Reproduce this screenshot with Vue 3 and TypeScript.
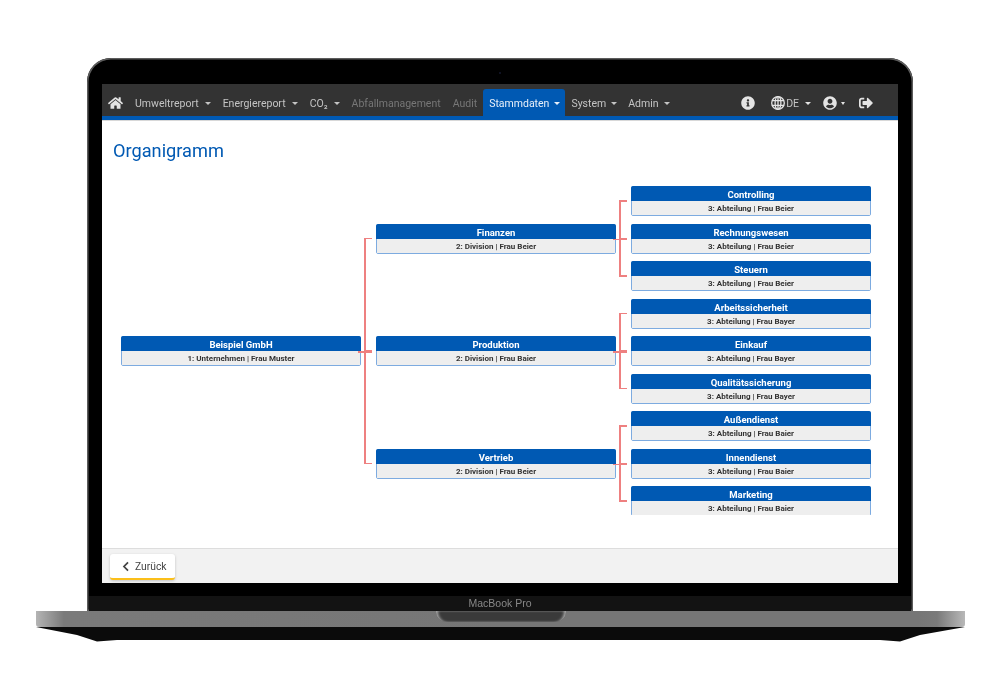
<script setup lang="ts">
interface Unit {
  name: string
  info: string
}
interface Division extends Unit {
  children: Unit[]
}

const menu = [
  { label: 'Umweltreport', caret: true },
  { label: 'Energiereport', caret: true },
  { label: 'CO₂', caret: true },
  { label: 'Abfallmanagement', disabled: true },
  { label: 'Audit', disabled: true },
  { label: 'Stammdaten', caret: true, active: true },
  { label: 'System', caret: true },
  { label: 'Admin', caret: true },
]

const dept = (name: string, person: string): Unit => ({ name, info: `3: Abteilung | ${person}` })

const divisions: Division[] = [
  {
    name: 'Finanzen',
    info: '2: Division | Frau Beier',
    children: [dept('Controlling', 'Frau Beier'), dept('Rechnungswesen', 'Frau Beier'), dept('Steuern', 'Frau Beier')],
  },
  {
    name: 'Produktion',
    info: '2: Division | Frau Baier',
    children: [dept('Arbeitssicherheit', 'Frau Bayer'), dept('Einkauf', 'Frau Bayer'), dept('Qualitätssicherung', 'Frau Bayer')],
  },
  {
    name: 'Vertrieb',
    info: '2: Division | Frau Beier',
    children: [dept('Außendienst', 'Frau Baier'), dept('Innendienst', 'Frau Baier'), dept('Marketing', 'Frau Baier')],
  },
]
</script>

<template>
  <div class="laptop">
    <div class="lid">
      <span class="camera"></span>
      <div class="screen">
        <nav class="navbar">
          <a class="nav-item home">
            <svg class="icon-home" viewBox="0 0 576 512"><path d="M280.37 148.26L96 300.11V464a16 16 0 0 0 16 16l112.06-.29a16 16 0 0 0 15.92-16V368a16 16 0 0 1 16-16h64a16 16 0 0 1 16 16v95.64a16 16 0 0 0 16 16.05L464 480a16 16 0 0 0 16-16V300L295.67 148.26a12.19 12.19 0 0 0-15.3 0zM571.6 251.47L488 182.56V44.05a12 12 0 0 0-12-12h-56a12 12 0 0 0-12 12v72.61L318.47 43a48 48 0 0 0-61 0L4.34 251.47a12 12 0 0 0-1.6 16.9l25.5 31A12 12 0 0 0 45.15 301l235.22-193.74a12.19 12.19 0 0 1 15.3 0L530.9 301a12 12 0 0 0 16.9-1.6l25.5-31a12 12 0 0 0-1.7-16.93z" /></svg>
          </a>
          <a
            v-for="item in menu"
            :key="item.label"
            class="nav-item"
            :class="{ active: item.active, disabled: item.disabled }"
          >
            {{ item.label }}<span v-if="item.caret" class="caret"></span>
          </a>
          <div class="nav-right">
            <svg class="icon" viewBox="0 0 512 512"><path d="M256 8C119.043 8 8 119.083 8 256c0 136.997 111.043 248 248 248s248-111.003 248-248C504 119.083 392.957 8 256 8zm0 110c23.196 0 42 18.804 42 42s-18.804 42-42 42-42-18.804-42-42 18.804-42 42-42zm56 254c0 6.627-5.373 12-12 12h-88c-6.627 0-12-5.373-12-12v-24c0-6.627 5.373-12 12-12h12v-64h-12c-6.627 0-12-5.373-12-12v-24c0-6.627 5.373-12 12-12h64c6.627 0 12 5.373 12 12v100h12c6.627 0 12 5.373 12 12v24z" /></svg>
            <svg class="icon globe" viewBox="0 0 14 14" fill="none" stroke="currentColor" stroke-width="1.3">
              <circle cx="7" cy="7" r="6.3" />
              <ellipse cx="7" cy="7" rx="2.9" ry="6.3" />
              <path d="M.9 4.6h12.2M.9 9.4h12.2M7 .7v12.6" />
            </svg>
            <span class="lang">DE</span>
            <span class="caret"></span>
            <svg class="icon user" viewBox="0 0 496 512"><path d="M248 8C111 8 0 119 0 256s111 248 248 248 248-111 248-248S385 8 248 8zm0 96c48.6 0 88 39.4 88 88s-39.4 88-88 88-88-39.4-88-88 39.4-88 88-88zm0 344c-58.7 0-111.3-26.6-146.5-68.2 18.8-35.4 55.6-59.8 98.5-59.8 2.4 0 4.8.4 7.1 1.1 13 4.2 26.6 6.9 40.9 6.9 14.3 0 28-2.7 40.9-6.9 2.3-.7 4.7-1.1 7.1-1.1 42.9 0 79.7 24.4 98.5 59.8C359.3 421.4 306.7 448 248 448z" /></svg>
            <span class="caret small"></span>
            <svg class="icon logout" viewBox="0 0 512 512"><path d="M497 273L329 441c-15 15-41 4.5-41-17v-96H152c-13.3 0-24-10.7-24-24v-96c0-13.3 10.7-24 24-24h136V88c0-21.4 25.9-32 41-17l168 168c9.3 9.4 9.3 24.6 0 34zM192 436v-40c0-6.6-5.4-12-12-12H96c-17.7 0-32-14.3-32-32V160c0-17.7 14.3-32 32-32h84c6.6 0 12-5.4 12-12V76c0-6.6-5.4-12-12-12H96c-53 0-96 43-96 96v192c0 53 43 96 96 96h84c6.6 0 12-5.4 12-12z" /></svg>
          </div>
        </nav>

        <main class="content">
          <h1 class="title">Organigramm</h1>
          <div class="chart">
            <div class="tree">
              <div class="node parent">
                <div class="node-name">Beispiel GmbH</div>
                <div class="node-info">1: Unternehmen | Frau Muster</div>
              </div>
              <div class="children divisions">
                <div v-for="d in divisions" :key="d.name" class="branch tree">
                  <div class="node parent">
                    <div class="node-name">{{ d.name }}</div>
                    <div class="node-info">{{ d.info }}</div>
                  </div>
                  <div class="children departments">
                    <div v-for="c in d.children" :key="c.name" class="branch">
                      <div class="node">
                        <div class="node-name">{{ c.name }}</div>
                        <div class="node-info">{{ c.info }}</div>
                      </div>
                    </div>
                  </div>
                </div>
              </div>
            </div>
          </div>
        </main>

        <footer class="footer">
          <button class="back">
            <svg class="chevron" viewBox="0 0 8 12" fill="none" stroke="currentColor" stroke-width="1.9"><path d="M6.2 1.5 1.8 6l4.4 4.5" /></svg>
            Zurück
          </button>
        </footer>
      </div>
      <div class="chin"></div>
      <div class="hinge">MacBook Pro</div>
    </div>
    <div class="base"><div class="notch"></div></div>
    <svg class="underside" viewBox="0 0 929 15" width="929" height="15">
      <path d="M0 0H929L884 8 864 14.5 844 13H107L81 13 61 14.5 41 8Z" fill="#0b0b0b" />
    </svg>
  </div>
</template>

<style>
html,
body {
  margin: 0;
  background: #fff;
}
</style>

<style scoped>
.laptop {
  width: 929px;
  margin-left: 36px;
  padding-top: 58px;
  filter: blur(0.3px);
}
.lid {
  position: relative;
  box-sizing: border-box;
  width: 826px;
  height: 553px;
  margin-left: 51px;
  padding: 26px 15px 0;
  background: #000;
  border-radius: 24px 24px 0 0;
  box-shadow: inset 0 0 0 1.5px #5c5c5c;
}
.camera {
  position: absolute;
  top: 14px;
  left: 412px;
  width: 2px;
  height: 2px;
  border-radius: 50%;
  background: #14182e;
}
.screen {
  display: flex;
  flex-direction: column;
  height: 499px;
  background: #fff;
  font-family: Roboto, "Open Sans", sans-serif;
}
.navbar {
  display: flex;
  align-items: flex-end;
  box-sizing: border-box;
  height: 36px;
  padding-top: 5px;
  background: #333;
  border-bottom: 4px solid #0059b3;
  box-shadow: 0 1px 0 #ccc;
  font-size: 10.5px;
  color: #c4c4c4;
}
.nav-item {
  display: flex;
  align-items: center;
  box-sizing: border-box;
  height: 27px;
  padding: 1px 6px 0;
  white-space: nowrap;
}
.nav-item.disabled {
  color: #777;
}
.nav-item.active {
  background: #0059b3;
  border-radius: 3px 3px 0 0;
  color: #e8f0fa;
}
.active,
.active ~ .nav-item {
  padding-right: 5px;
}
.active .caret,
.active ~ .nav-item .caret {
  margin-left: 5px;
}
.icon-home {
  width: 15px;
  height: 14px;
  fill: #e4e4e4;
}
.caret {
  display: inline-block;
  margin-left: 6px;
  border-top: 3px solid currentColor;
  border-left: 3px solid transparent;
  border-right: 3px solid transparent;
}
.nav-right {
  display: flex;
  align-items: center;
  box-sizing: border-box;
  height: 27px;
  margin-left: auto;
  padding: 1px 25px 0 0;
  color: #e4e4e4;
}
.icon {
  width: 14px;
  height: 14px;
  fill: currentColor;
}
.globe {
  margin-left: 16px;
  fill: none;
}
.lang {
  margin-left: 1px;
  color: #c4c4c4;
}
.user {
  margin-left: 12px;
}
.caret.small {
  margin-left: 4px;
  border-width: 3px 2.5px 0;
}
.logout {
  margin-left: 14px;
}
.content {
  flex: 1;
  min-height: 0;
  padding-left: 11px;
  border-top: 1px solid #d8d8d8;
}
.title {
  margin: 0;
  padding-top: 18px;
  height: 47px;
  box-sizing: border-box;
  font-size: 18.2px;
  font-weight: 400;
  line-height: 24px;
  color: #0059b3;
}
.chart {
  height: 329px;
  margin: 18px 0 0 8px;
  overflow: hidden;
}
.tree {
  display: flex;
  align-items: center;
  gap: 15px;
}
.node {
  position: relative;
  box-sizing: border-box;
  width: 240px;
  height: 30px;
  border: 1px solid #7dabe0;
  border-radius: 2px;
  overflow: visible;
  text-align: center;
  font-weight: 700;
}
.node-name {
  height: 15px;
  margin: -1px -1px 0;
  background: #0059b3;
  border-radius: 2px 2px 0 0;
  color: #fff;
  font-size: 9.5px;
  line-height: 18px;
}
.node-info {
  height: 14px;
  background: #eee;
  color: #333;
  font-size: 8px;
  line-height: 15px;
}
.parent::after {
  content: "";
  position: absolute;
  top: 14px;
  right: -12px;
  width: 14px;
  height: 1.5px;
  background: #ee8080;
}
.children {
  position: relative;
  display: flex;
  flex-direction: column;
  gap: 7.5px;
}
.children::before {
  content: "";
  position: absolute;
  left: -12px;
  width: 1.5px;
  background: #ee8080;
}
.divisions::before {
  top: 52.5px;
  bottom: 52.5px;
}
.departments::before {
  top: 14px;
  bottom: 14.5px;
}
.branch {
  position: relative;
}
.branch::before {
  content: "";
  position: absolute;
  top: calc(50% - 1px);
  left: -12px;
  width: 8px;
  height: 1.5px;
  background: #ee8080;
}
.footer {
  height: 35px;
  box-sizing: border-box;
  padding: 5px 8px;
  background: #f2f2f2;
  border-top: 1px solid #ddd;
}
.back {
  display: flex;
  align-items: center;
  gap: 5px;
  box-sizing: border-box;
  width: 65px;
  height: 26px;
  padding: 0 0 0 12px;
  background: #fff;
  border: 0;
  border-bottom: 2px solid #fbbf1a;
  border-radius: 3px;
  box-shadow: 0 1px 3px rgba(0, 0, 0, 0.2);
  font-family: Roboto, "Open Sans", sans-serif;
  font-size: 10.3px;
  color: #444;
}
.chevron {
  width: 8px;
  height: 11px;
}
.chin {
  height: 13px;
}
.hinge {
  height: 15px;
  margin: 0 -13px;
  background: #131313;
  text-align: center;
  font-family: "Liberation Sans", sans-serif;
  font-size: 10.5px;
  line-height: 15px;
  color: #888;
}
.base {
  display: flex;
  justify-content: center;
  height: 16px;
  border-radius: 0 0 3px 3px;
  background: linear-gradient(90deg, #b4b4b4 0, #7a7a7a 3%, #767676 50%, #767676 95%, #7a7a7a 97%, #b8b8b8 100%);
}
.notch {
  width: 130px;
  height: 11px;
  border-radius: 0 0 10px 10px;
  background: #3a3a3a;
  box-shadow: inset 3px 0 3px -1px #aaa, inset -3px 0 3px -1px #aaa;
}
.underside {
  display: block;
}
</style>
